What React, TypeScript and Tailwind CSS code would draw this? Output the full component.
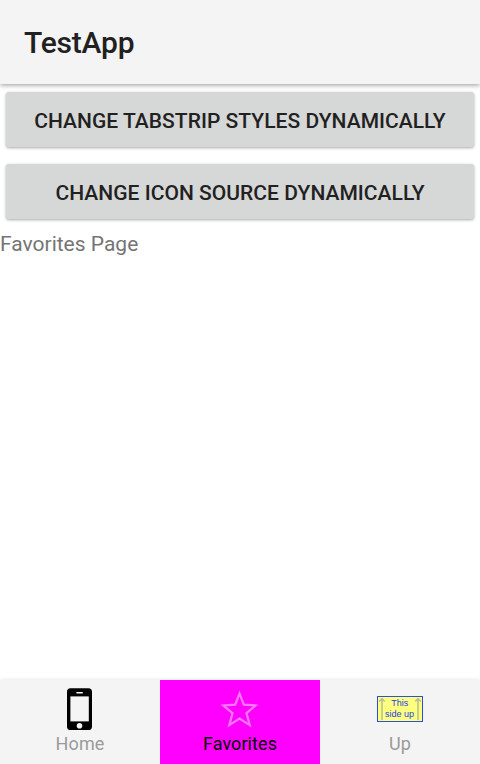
import React from "react";

function PhoneIcon() {
  return (
    <svg width="26" height="42" viewBox="0 0 26 42" aria-hidden="true">
      <rect x="0" y="0.2" width="25" height="41.8" rx="3.6" fill="#000" />
      <rect x="3.4" y="8.4" width="18.4" height="25" fill="#f4f4f4" />
      <rect x="9.2" y="4" width="6.8" height="1.6" rx="0.8" fill="#f4f4f4" />
      <circle cx="12.5" cy="37.7" r="2.8" fill="#f4f4f4" />
    </svg>
  );
}

function StarIcon() {
  return (
    <svg width="38" height="42" viewBox="0 0 38 42" aria-hidden="true">
      <path
        d="M18.5 5.6 L22.8 16.7 L34.7 17.4 L25.5 25.2 L28.7 37.1 L18.5 30.6 L8.3 37.1 L11.5 25.2 L2.3 17.4 L14.2 16.7 Z"
        fill="none"
        stroke="#ff78ff"
        strokeWidth="2.2"
      />
    </svg>
  );
}

function SignIcon() {
  return (
    <svg width="46" height="26" viewBox="0 0 46 26" aria-hidden="true">
      <rect x="0.5" y="0.5" width="45" height="25" fill="#ffff80" stroke="#2a50dc" />
      <path d="M5 24V3M2.3 5.4L5 2.6L7.7 5.4M41 24V3M38.3 5.4L41 2.6L43.7 5.4" fill="none" stroke="#b8bd94" strokeWidth="1.5" />
      <g fill="#2040e8" fontFamily="Liberation Sans, Arial, sans-serif" fontSize="9" textAnchor="middle">
        <text x="22.7" y="10" textLength="17" lengthAdjust="spacingAndGlyphs">This</text>
        <text x="22.5" y="21" textLength="29" lengthAdjust="spacingAndGlyphs">side up</text>
      </g>
    </svg>
  );
}

function ActionButton({ children }: { children: React.ReactNode }) {
  return (
    <button className="flex h-[55px] items-center justify-center rounded-[3px] bg-[#d6d7d7] pt-[5px] text-[21px] font-medium tracking-[0.03px] text-[#212121] shadow-[0_1px_3px_rgba(0,0,0,0.34)]">
      {children}
    </button>
  );
}

function Tab({ label, icon, active = false }: { label: string; icon: React.ReactNode; active?: boolean }) {
  return (
    <div
      className={
        active
          ? "flex flex-1 flex-col items-center bg-[#ff00ff] pt-[8px] text-black"
          : "flex flex-1 flex-col items-center pt-[8px] text-[#9a9a9a]"
      }
    >
      <div className="flex h-[42px] items-center">{icon}</div>
      <span className="mt-[3px] text-[18px] leading-[22px] tracking-[0.08px]">{label}</span>
    </div>
  );
}

export default function App() {
  return (
    <div className="flex h-[764px] w-[480px] flex-col overflow-hidden bg-white font-[Roboto,sans-serif]">
      <header className="flex h-[84px] shrink-0 items-center bg-[#f4f4f4] pl-6 text-[30px] font-medium tracking-[-0.2px] text-[#212121] shadow-[0_1px_5px_rgba(0,0,0,0.42)]">
        <h1>TestApp</h1>
      </header>
      <main className="flex flex-1 flex-col">
        <div className="flex flex-col gap-[17px] px-[6px] pt-[8px]">
          <ActionButton>CHANGE TABSTRIP STYLES DYNAMICALLY</ActionButton>
          <ActionButton>CHANGE ICON SOURCE DYNAMICALLY</ActionButton>
        </div>
        <p className="mt-[11px] text-[21px] leading-[28px] text-[#757575]">Favorites Page</p>
      </main>
      <nav className="flex h-[84px] shrink-0 bg-[#f4f4f4] shadow-[0_0_4px_rgba(0,0,0,0.12)]">
        <Tab label="Home" icon={<PhoneIcon />} />
        <Tab label="Favorites" icon={<StarIcon />} active />
        <Tab label="Up" icon={<SignIcon />} />
      </nav>
    </div>
  );
}
